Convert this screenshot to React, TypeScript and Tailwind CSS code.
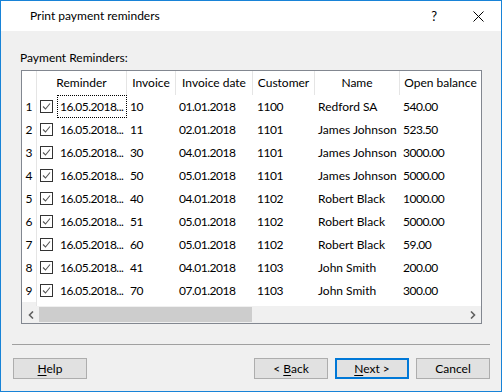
import React from "react";

const rows = [
  ["1", "10", "01.01.2018", "1100", "Redford SA", "540.00"],
  ["2", "11", "02.01.2018", "1101", "James Johnson", "523.50"],
  ["3", "30", "04.01.2018", "1101", "James Johnson", "3000.00"],
  ["4", "50", "05.01.2018", "1101", "James Johnson", "5000.00"],
  ["5", "40", "04.01.2018", "1102", "Robert Black", "1000.00"],
  ["6", "51", "05.01.2018", "1102", "Robert Black", "5000.00"],
  ["7", "60", "05.01.2018", "1102", "Robert Black", "59.00"],
  ["8", "41", "04.01.2018", "1103", "John Smith", "200.00"],
  ["9", "70", "07.01.2018", "1103", "John Smith", "300.00"],
];

function CheckBox() {
  return (
    <svg width="13" height="13" viewBox="0 0 13 13" className="block">
      <rect x="0.5" y="0.5" width="12" height="12" fill="#fff" stroke="#333" />
      <polyline points="3,6.5 5.5,9 10,3.5" fill="none" stroke="#555" strokeWidth="1.1" />
    </svg>
  );
}

function Chevron({ dir }: { dir: "left" | "right" }) {
  return (
    <svg width="6" height="8" viewBox="0 0 6 8" className="block">
      <polyline
        points={dir === "left" ? "5,0.5 1.5,4 5,7.5" : "1,0.5 4.5,4 1,7.5"}
        fill="none"
        stroke="#606060"
        strokeWidth="1.6"
      />
    </svg>
  );
}

function Button({ children, focused }: { children: React.ReactNode; focused?: boolean }) {
  return (
    <div
      className={
        focused
          ? "w-[74px] h-[21px] flex items-center justify-center bg-[#e1e1e1] border-2 border-[#0078d7]"
          : "w-[74px] h-[21px] flex items-center justify-center bg-[#e1e1e1] border border-[#adadad]"
      }
    >
      {children}
    </div>
  );
}

export default function App() {
  return (
    <div className="w-[502px] h-[392px] flex flex-col border border-[#1883d7] bg-[#f0f0f0] text-[12px] text-black font-['Lato','Liberation_Sans',sans-serif]">
      <div className="h-[30px] shrink-0 bg-white flex items-center">
        <span className="pl-[29px] leading-none">Print payment reminders</span>
        <span className="ml-auto mr-[36px] text-[13px] leading-none">?</span>
        <svg width="11" height="11" viewBox="0 0 11 11" className="mr-[17px] block">
          <path d="M0.5 0.5 L10.5 10.5 M10.5 0.5 L0.5 10.5" stroke="#000" strokeWidth="1" />
        </svg>
      </div>

      <div className="flex-1 flex flex-col">
        <div className="ml-[19px] mt-[19px] h-[16px] leading-[16px]">Payment Reminders:</div>

        <div className="ml-[20px] mt-[4px] w-[461px] border border-[#828790] bg-white flex flex-col">
          <div className="h-[24px] flex">
            <div className="w-[15px] border-r border-[#e5e5e5]" />
            <div className="w-[90px] border-r border-[#e5e5e5] flex items-center justify-center">Reminder</div>
            <div className="w-[49px] border-r border-[#e5e5e5] flex items-center justify-center">Invoice</div>
            <div className="w-[77px] border-r border-[#e5e5e5] flex items-center justify-center">Invoice date</div>
            <div className="w-[62px] border-r border-[#e5e5e5] flex items-center justify-center">Customer</div>
            <div className="w-[85px] border-r border-[#e5e5e5] flex items-center justify-center">Name</div>
            <div className="w-[81px] flex items-center justify-center whitespace-nowrap overflow-hidden">Open balance</div>
          </div>

          {rows.map((r, i) => (
            <div key={r[0]} className="h-[23px] flex items-center">
              <div className="w-[15px] h-full border-r border-[#e5e5e5] flex items-center justify-center">{r[0]}</div>
              <div className="w-[20px] h-full flex items-center pl-[3px]">
                <CheckBox />
              </div>
              <div
                className={
                  i === 0
                    ? "w-[70px] h-full flex items-center pl-[2px] border border-dotted border-black tracking-[-0.5px] whitespace-nowrap overflow-hidden"
                    : "w-[70px] h-full flex items-center pl-[3px] tracking-[-0.5px] whitespace-nowrap overflow-hidden"
                }
              >
                16.05.2018...
              </div>
              <div className="w-[49px] pl-[3px] tracking-[-0.5px]">{r[1]}</div>
              <div className="w-[77px] pl-[3px] tracking-[-0.5px]">{r[2]}</div>
              <div className="w-[62px] pl-[4px] tracking-[-0.5px]">{r[3]}</div>
              <div className="w-[85px] pl-[3px] whitespace-nowrap">{r[4]}</div>
              <div className="w-[81px] pl-[3px] tracking-[-0.5px]">{r[5]}</div>
            </div>
          ))}

          <div className="h-[4px] flex">
            <div className="w-[15px] bg-[#f0f0f0] border-r border-[#e5e5e5]" />
          </div>

          <div className="h-[17px] flex items-center bg-[#f0f0f0]">
            <div className="w-[17px] h-full flex items-center justify-center">
              <Chevron dir="left" />
            </div>
            <div className="w-[213px] h-[15px] bg-[#cdcdcd]" />
            <div className="ml-auto w-[17px] h-full flex items-center justify-center">
              <Chevron dir="right" />
            </div>
          </div>
        </div>

        <div className="ml-[11px] mt-[20px] w-[478px] h-px bg-[#a0a0a0]" />

        <div className="mt-[13px] flex ml-[12px] mr-[11px]">
          <Button>
            <span>
              <span className="underline underline-offset-2">H</span>elp
            </span>
          </Button>
          <div className="ml-auto flex gap-[7px]">
            <Button>
              <span>
                &lt; <span className="underline underline-offset-2">B</span>ack
              </span>
            </Button>
            <Button focused>
              <span>
                <span className="underline underline-offset-2">N</span>ext &gt;
              </span>
            </Button>
            <Button>Cancel</Button>
          </div>
        </div>
      </div>
    </div>
  );
}
